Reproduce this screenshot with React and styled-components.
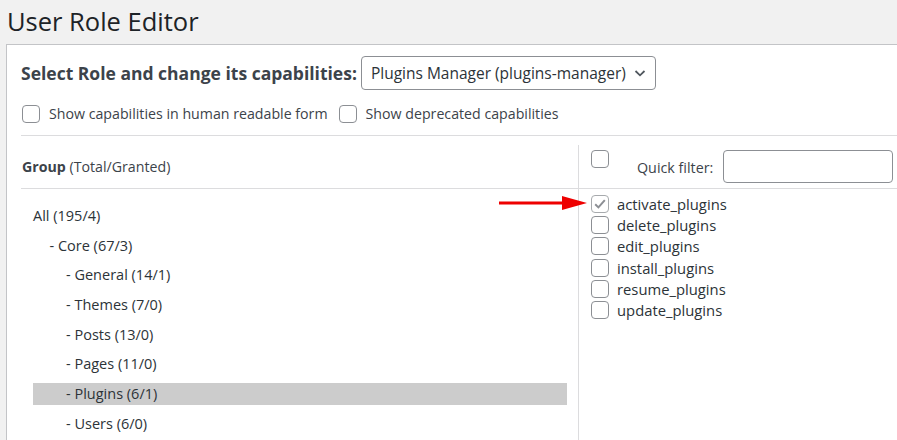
import React from "react";
import styled, { createGlobalStyle } from "styled-components";

const Global = createGlobalStyle`
  html, body { margin: 0; padding: 0; }
  body {
    background: #f1f1f1;
    font-family: "Open Sans", "Noto Sans", sans-serif;
    color: #3c434a;
    overflow: hidden;
  }
`;

const Page = styled.div`
  width: 897px;
  height: 440px;
  overflow: hidden;
`;

const Title = styled.h1`
  margin: 0;
  padding: 6px 0 0 7px;
  height: 44px;
  box-sizing: border-box;
  font-size: 25.5px;
  font-weight: 400;
  line-height: 30px;
  color: #1d2327;
`;

const Panel = styled.div`
  margin-left: 6px;
  background: #fff;
  border: 1px solid #c3c4c7;
  border-right: none;
  border-bottom: none;
  padding: 11px 0 0 14px;
  height: 400px;
  box-sizing: border-box;
`;

const RoleRow = styled.div`
  display: flex;
  align-items: center;
  gap: 4px;
  height: 34px;
`;

const RoleLabel = styled.span`
  font-weight: 700;
  font-size: 17.5px;
  color: #3c434a;
`;

const Select = styled.div`
  display: flex;
  align-items: center;
  height: 34px;
  box-sizing: border-box;
  border: 1px solid #8c8f94;
  border-radius: 4px;
  padding: 0 8px 0 9px;
  gap: 7px;
  font-size: 15.5px;
  color: #2c3338;
`;

const OptionsRow = styled.div`
  display: flex;
  align-items: center;
  height: 23px;
  margin-top: 12px;
  font-size: 14.2px;
`;

const OptionLabel = styled.label`
  display: flex;
  align-items: center;
  gap: 9px;
  margin-right: 10px;
  margin-left: 1px;
`;

const Box = styled.span`
  display: inline-flex;
  align-items: center;
  justify-content: center;
  width: 18px;
  height: 18px;
  box-sizing: border-box;
  border: 1px solid ${(p) => (p.$checked ? "#a7aaad" : "#8c8f94")};
  border-radius: 4px;
  background: #fff;
  flex: none;
`;

const Section = styled.div`
  margin-top: 10px;
  border-top: 1px solid #dcdcde;
  padding-top: 9px;
`;

const Grid = styled.div`
  display: grid;
  grid-template-columns: 558px 1fr;
  grid-template-rows: 44px 1fr;
  height: 300px;
`;

const HeadLeft = styled.div`
  border-right: 1px solid #dcdcde;
  border-bottom: 1px solid #dcdcde;
  display: flex;
  align-items: center;
  padding-left: 1px;
  font-size: 14.2px;
  color: #3c434a;
  b { font-weight: 700; }
`;

const HeadRight = styled.div`
  border-bottom: 1px solid #dcdcde;
  display: flex;
  align-items: flex-start;
  padding: 5px 0 0 12px;
  font-size: 14.3px;
`;

const FilterLabel = styled.span`
  margin: 8px 10px 0 28px;
`;

const FilterInput = styled.div`
  width: 170px;
  height: 33px;
  box-sizing: border-box;
  border: 1px solid #8c8f94;
  border-radius: 4px;
  background: #fff;
`;

const Tree = styled.div`
  border-right: 1px solid #dcdcde;
  display: flex;
  flex-direction: column;
  gap: 7.7px;
  padding: 16px 11px 0 12px;
`;

const TreeRow = styled.div`
  height: 22px;
  line-height: 22px;
  font-size: 14.5px;
  color: #2c3338;
  padding-left: ${(p) => p.$level * 16.5}px;
  background: ${(p) => (p.$active ? "#cccccc" : "transparent")};
`;

const Caps = styled.div`
  display: flex;
  flex-direction: column;
  padding: 6px 0 0 12px;
  gap: 3.2px;
`;

const CapRow = styled.div`
  position: relative;
  display: flex;
  align-items: center;
  gap: 8px;
  height: 18px;
  font-size: 14.8px;
  color: #2c3338;
`;

const Arrow = styled.svg`
  position: absolute;
  left: -92px;
  top: -2px;
`;

const Chevron = () => (
  <svg width="14" height="14" viewBox="0 0 14 14">
    <path d="M2.5 5 L7 9.3 L11.5 5" fill="none" stroke="#50575e" strokeWidth="1.8" />
  </svg>
);

const Check = () => (
  <svg width="14" height="14" viewBox="0 0 14 14">
    <path d="M2.2 7.3 L5.4 10.4 L11.8 3.2" fill="none" stroke="#8c8f94" strokeWidth="2" />
  </svg>
);

const tree = [
  ["All (195/4)", 0],
  ["- Core (67/3)", 1],
  ["- General (14/1)", 2],
  ["- Themes (7/0)", 2],
  ["- Posts (13/0)", 2],
  ["- Pages (11/0)", 2],
  ["- Plugins (6/1)", 2, true],
  ["- Users (6/0)", 2],
];

const caps = [
  "activate_plugins",
  "delete_plugins",
  "edit_plugins",
  "install_plugins",
  "resume_plugins",
  "update_plugins",
];

export default function App() {
  return (
    <Page>
      <Global />
      <Title>User Role Editor</Title>
      <Panel>
        <RoleRow>
          <RoleLabel>Select Role and change its capabilities:</RoleLabel>
          <Select>
            Plugins Manager (plugins-manager)
            <Chevron />
          </Select>
        </RoleRow>
        <OptionsRow>
          <OptionLabel>
            <Box />
            Show capabilities in human readable form
          </OptionLabel>
          <OptionLabel>
            <Box />
            Show deprecated capabilities
          </OptionLabel>
        </OptionsRow>
        <Section>
          <Grid>
            <HeadLeft>
              <span>
                <b>Group</b> (Total/Granted)
              </span>
            </HeadLeft>
            <HeadRight>
              <Box />
              <FilterLabel>Quick filter:</FilterLabel>
              <FilterInput />
            </HeadRight>
            <Tree>
              {tree.map(([t, l, a]) => (
                <TreeRow key={t} $level={l} $active={a}>
                  {t}
                </TreeRow>
              ))}
            </Tree>
            <Caps>
              {caps.map((c, i) => (
                <CapRow key={c}>
                  {i === 0 && (
                    <Arrow width="90" height="20" viewBox="0 0 90 20">
                      <line x1="0" y1="10" x2="66" y2="10" stroke="#ee0000" strokeWidth="3" />
                      <polygon points="63,3 88,10 63,17" fill="#ee0000" />
                    </Arrow>
                  )}
                  <Box $checked={i === 0}>{i === 0 && <Check />}</Box>
                  {c}
                </CapRow>
              ))}
            </Caps>
          </Grid>
        </Section>
      </Panel>
    </Page>
  );
}
